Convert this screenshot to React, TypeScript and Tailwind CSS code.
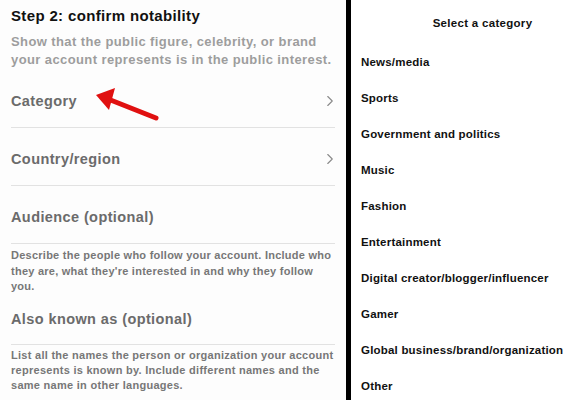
import { ChevronRight } from "lucide-react";

const categories = [
  "News/media",
  "Sports",
  "Government and politics",
  "Music",
  "Fashion",
  "Entertainment",
  "Digital creator/blogger/influencer",
  "Gamer",
  "Global business/brand/organization",
  "Other",
];

function Row({ label, chevron, short }: { label: string; chevron?: boolean; short?: boolean }) {
  return (
    <div
      className={`flex items-end justify-between ${short ? "h-[50px] pb-[16px]" : "h-[58px] pb-[17px]"} border-b border-[#e2e2e2] mr-[11px]`}
    >
      <span className="text-[14.5px] font-bold text-[#6b6b6b] tracking-[0.4px] leading-[18px]">{label}</span>
      {chevron && <ChevronRight size={18} strokeWidth={1.5} className="text-[#8a8a8a] -mr-1" />}
    </div>
  );
}

export default function App() {
  return (
    <div className="w-[576px] h-[400px] flex bg-white overflow-hidden font-['Liberation_Sans',Arial,sans-serif]">
      {/* Left: form */}
      <div className="relative w-[346px] shrink-0 pl-[11px] pt-[6px] bg-[#fdfdfd]">
        <h1 className="text-[15px] font-bold text-[#111] leading-[20px] tracking-[0.35px]">Step 2: confirm notability</h1>
        <p className="mt-[7px] text-[13px] font-bold text-[#9d9d9d] leading-[18px] tracking-[0.4px]">
          Show that the public figure, celebrity, or brand
          <br />
          your account represents is in the public interest.
        </p>
        <div className="mt-[1px]">
          <Row label="Category" chevron />
          <Row label="Country/region" chevron />
          <Row label="Audience (optional)" />
        </div>
        <p className="mt-[4px] mr-[11px] text-[11px] font-bold text-[#777] leading-[15.5px] tracking-[0.25px]">
          Describe the people who follow your account. Include who
          <br />
          they are, what they're interested in and why they follow
          <br />
          you.
        </p>
        <Row label="Also known as (optional)" short />
        <p className="mt-[3px] mr-[11px] text-[11px] font-bold text-[#777] leading-[15px] tracking-[0.28px]">
          List all the names the person or organization your account
          <br />
          represents is known by. Include different names and the
          <br />
          same name in other languages.
        </p>

        {/* annotation arrow */}
        <svg className="absolute left-[92px] top-[86px]" width="70" height="38" viewBox="0 0 70 38">
          <line x1="64" y1="32" x2="16" y2="13" stroke="#e01010" strokeWidth="5" strokeLinecap="round" />
          <polygon points="4,9 23,2 17,24" fill="#e01010" />
        </svg>
      </div>

      <div className="w-[5px] shrink-0 bg-black" />

      {/* Right: category list */}
      <div className="flex-1 pl-[10px] pt-[15px]">
        <h2 className="pl-[28px] text-center text-[11.5px] font-bold text-[#111] leading-[16px] tracking-[0.3px]">
          Select a category
        </h2>
        <ul className="mt-[23px] flex flex-col">
          {categories.map((c) => (
            <li key={c} className="h-[36px] text-[11.5px] font-bold text-[#111] leading-[16px] tracking-[0.2px]">
              {c}
            </li>
          ))}
        </ul>
      </div>
    </div>
  );
}
